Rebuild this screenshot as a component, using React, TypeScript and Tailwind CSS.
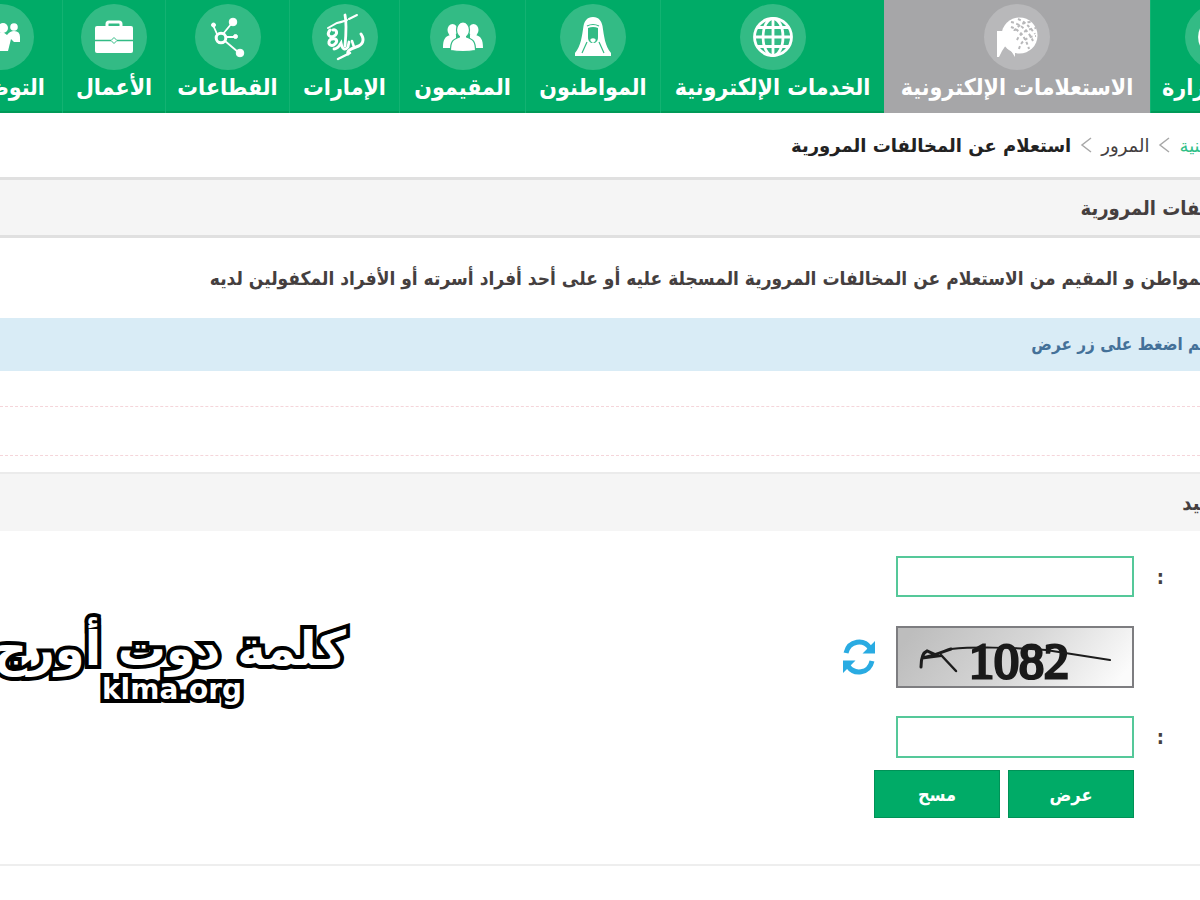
import { useState } from "react";
import type { ReactNode } from "react";

type NavItem = {
  title: string;
  width: string;
  icon: ReactNode;
  active?: boolean;
};

const GlobeIcon = () => (
  <svg viewBox="0 0 40 40" className="size-10" fill="none" stroke="white" strokeWidth="2.800">
    <circle cx="20" cy="20" r="18.5" />
    <ellipse cx="20" cy="20" rx="10" ry="18.5" />
    <path d="M20 1v38M1 20h38M4 10.500h32M4 29.500h32" />
  </svg>
);

const InquiryIcon = () => (
  <svg viewBox="0 0 42 42" className="size-[42px]" fill="none">
    <circle cx="23.500" cy="19.500" r="18" fill="white" />
    <g stroke="#b8b8ba" strokeWidth="2" strokeDasharray="3 2.500">
      <path d="M15 6c9 2 17 8 22 19M22 3c7 3 12 8 17 15M15 11c8 3 14 9 18 22" />
      <path d="M18 15c4-5 9-9 17-9M21 24c3-7 10-11 19-12M23 33c2-8 8-12 17-13" />
    </g>
    <path d="M1 15h18v26l-4.500-7-4.500-5-4 6-3 6H1z" fill="white" />
  </svg>
);

const CitizenIcon = () => (
  <svg viewBox="0 0 38 40" className="h-10 w-[38px]">
    <path
      d="M19 0c-6 0-8.500 4-9.500 9C8 19 7 29 1 36v3h36v-3c-6-7-7-17-8.500-27C27.500 4 25 0 19 0z"
      fill="white"
    />
    <path d="M14 11c3-1.500 7-1.500 10 0v9c0 4-2 6-5 6s-5-2-5-6z" fill="#33bb85" />
    <path d="M13 9c4-2 8-2 12 0M13 25l-5 11M25 25l5 11" stroke="#33bb85" strokeWidth="1.200" fill="none" />
    <path d="M16.500 22c2-1 3-1 5 0v2l-2.500 2-2.500-2z" fill="white" />
  </svg>
);

const ResidentsIcon = () => (
  <svg viewBox="0 0 40 30" className="h-[30px] w-10" fill="white">
    <ellipse cx="9.500" cy="8" rx="5" ry="6" />
    <ellipse cx="30.500" cy="8" rx="5" ry="6" />
    <path d="M0 26c0-9 2-11 7-13h6v13zM40 26c0-9-2-11-7-13h-6v13z" />
    <ellipse cx="20" cy="8" rx="6.500" ry="8" stroke="#33bb85" strokeWidth="1.200" />
    <path
      d="M7.500 28.500c0-9 2-11 9-13.500h7c7 2.500 9 4.500 9 13.500q-12.500 2-25 0z"
      stroke="#33bb85"
      strokeWidth="1.200"
    />
    <path d="M17 12h6v5h-6z" />
  </svg>
);

const CalligraphyIcon = () => (
  <svg viewBox="0 0 42 50" className="h-[50px] w-[42px]" fill="none" stroke="white" strokeLinecap="round">
    <path d="M21 3c2 9 1 20 0 31" strokeWidth="2.800" />
    <path d="M4 16l9-5c4-1 8-2 10-3M25 7l8-4" strokeWidth="2" />
    <path d="M6 18c-4 5 0 8 4 6s3-7-1-6M7 27c-5 4 0 9 4 5s0-6-3-5" strokeWidth="3" />
    <path d="M10 37c4 0 5-3 7-6 1 6 4 8 7 4l1-5" strokeWidth="2.800" />
    <path d="M37 22c4 6 2 11-5 13-6 2-9 4-8 7" strokeWidth="3" />
    <path d="M28 29l2 6M14 47l12-6" strokeWidth="2.500" />
  </svg>
);

const SectorsIcon = () => (
  <svg viewBox="0 0 36 42" className="h-[42px] w-9" fill="white" stroke="white">
    <circle cx="11" cy="22" r="4.800" fill="none" strokeWidth="3" />
    <path d="M13 18l9-11M7 18L3 9M16 21h9M15 25l13 11" strokeWidth="1.800" />
    <circle cx="3.500" cy="9" r="2" />
    <circle cx="23" cy="6" r="3.800" />
    <circle cx="25.500" cy="20.500" r="2" />
    <circle cx="30" cy="37" r="3.800" />
  </svg>
);

const BriefcaseIcon = () => (
  <svg viewBox="0 0 38 34" className="h-[34px] w-[38px]">
    <path d="M12 7V4q0-2 2-2h10q2 0 2 2v3" fill="none" stroke="white" strokeWidth="3" />
    <rect y="6" width="38" height="27" rx="2" fill="white" />
    <path d="M0 20.500h16M22 20.500h16" stroke="#33bb85" strokeWidth="1.500" />
    <path d="M19 17.500l3 3-3 3-3-3z" stroke="#33bb85" fill="white" />
  </svg>
);

const JobsIcon = () => (
  <svg viewBox="0 0 42 30" className="h-[30px] w-[42px]" fill="white">
    <circle cx="34" cy="5" r="3.800" />
    <circle cx="23" cy="6" r="5" />
    <circle cx="8" cy="5" r="4" />
    <path d="M27 13q3-4 7-4 6 0 6 6v5h-6l-3-3-3 12H14V11l9-1z" />
    <path d="M0 12q4-4 16-1v18H4z" />
  </svg>
);

const RefreshIcon = () => (
  <svg viewBox="0 0 34 36" className="h-9 w-[34px]">
    <g fill="none" stroke="#29abe2" strokeWidth="5">
      <path d="M4 14C7 1 22 0 28 9" />
      <path d="M30 22C27 35 12 36 6 27" />
    </g>
    <path d="M33 2v12.500H20.500zM1 34V21.500h12.500z" fill="#29abe2" />
  </svg>
);

const navItems: NavItem[] = [
  { title: "عن الوزارة", width: "w-[134px]", icon: <GlobeIcon /> },
  { title: "الاستعلامات الإلكترونية", width: "w-[266px]", icon: <InquiryIcon />, active: true },
  { title: "الخدمات الإلكترونية", width: "w-[224px]", icon: <GlobeIcon /> },
  { title: "المواطنون", width: "w-[135px]", icon: <CitizenIcon /> },
  { title: "المقيمون", width: "w-[126px]", icon: <ResidentsIcon /> },
  { title: "الإمارات", width: "w-[110px]", icon: <CalligraphyIcon /> },
  { title: "القطاعات", width: "w-[124px]", icon: <SectorsIcon /> },
  { title: "الأعمال", width: "w-[103px]", icon: <BriefcaseIcon /> },
  { title: "التوظيف", width: "w-[124px]", icon: <JobsIcon /> },
];

const Chevron = () => (
  <svg viewBox="0 0 12 16" className="h-4 w-3 shrink-0" fill="none" stroke="#a8a8a8" strokeWidth="1.500">
    <path d="M11 1L2 8l9 7" />
  </svg>
);

const Captcha = () => (
  <svg viewBox="0 0 238 62" className="h-[62px] w-[238px]" role="img" aria-label="1082">
    <defs>
      <linearGradient id="captcha-bg" x1="0" y1="0.400" x2="1" y2="0.600">
        <stop offset="0" stopColor="#bdbdbd" />
        <stop offset="0.500" stopColor="#d6d6d6" />
        <stop offset="1" stopColor="#fbfbfb" />
      </linearGradient>
    </defs>
    <rect x="1" y="1" width="236" height="60" fill="url(#captcha-bg)" stroke="#7d7d80" strokeWidth="2" />
    <text
      x="123"
      y="52"
      textAnchor="middle"
      direction="ltr"
      fontSize="50"
      stroke="#1a1a1a"
      strokeWidth="3"
      fill="#1a1a1a"
      className="font-['Liberation_Serif',serif]"
    >
      1082
    </text>
    <g fill="none" stroke="#1c1c1c" strokeLinecap="round">
      <path d="M25 41c0-8 1-14 6-16l11 5-16 2C38 30 46 26 55 23" strokeWidth="3" />
      <path d="M45 29l15 16" strokeWidth="2.500" />
      <path d="M55 23c20-2 60-2 95 1l64 10" strokeWidth="2" />
    </g>
  </svg>
);

function Navbar() {
  return (
    <nav className="-mr-[84px] flex h-[113px] border-b-2 border-[#009b58] bg-[#00ab67]">
      {navItems.map((item) => (
        <a
          key={item.title}
          href="#"
          className={`${item.width} ${
            item.active ? "bg-[#a6a6a8]" : "border-l border-[#13b272]"
          } flex h-[113px] shrink-0 flex-col items-center pt-1 text-white`}
        >
          <span
            className={`${
              item.active ? "bg-[#b8b8ba]" : "bg-[#33bb85]"
            } flex size-[66px] shrink-0 items-center justify-center rounded-full`}
          >
            {item.icon}
          </span>
          <span className="text-[23px] leading-[34px] font-bold whitespace-nowrap">{item.title}</span>
        </a>
      ))}
    </nav>
  );
}

export default function App() {
  const [idNumber, setIdNumber] = useState("");
  const [code, setCode] = useState("");

  return (
    <div
      dir="rtl"
      className="relative min-h-screen overflow-hidden bg-white font-['DejaVu_Sans_Condensed','DejaVu_Sans',sans-serif] text-[#453f3f]"
    >
      <Navbar />
      <div className="flex h-16 items-center gap-[9px] font-['DejaVu_Sans',sans-serif] text-[18px] whitespace-nowrap">
        <a href="#" className="text-[#2fc088]">
          {"\u200dنية"}
        </a>
        <Chevron />
        <a href="#">المرور</a>
        <Chevron />
        <span className="font-bold text-[#222]">استعلام عن المخالفات المرورية</span>
      </div>
      <h1 className="flex h-[61px] items-center border-y-3 border-[#e0e0e0] bg-[#f5f5f5] text-[20px] font-bold whitespace-nowrap">
        {"\u200dفات المرورية"}
      </h1>
      <p className="flex h-20 items-center text-[19px] font-bold whitespace-nowrap">
        {"\u200dمواطن و المقيم من الاستعلام عن المخالفات المرورية المسجلة عليه أو على أحد أفراد أسرته أو الأفراد المكفولين لديه"}
      </p>
      <div className="flex h-[53px] items-center bg-[#d9ecf6] text-[17px] font-bold text-[#447199]">
        {"\u200dم اضغط على زر عرض"}
      </div>
      <div className="mt-[35px] h-[50px] border-y border-dashed border-[#f5d5da]" />
      <section className="mt-4 border-b-2 border-[#eeeeee] pb-[46px]">
        <h2 className="flex h-[59px] items-center border-t-2 border-[#ebebeb] bg-[#f5f5f5] text-[20px] font-bold">
          {"\u200dيد"}
        </h2>
        <form className="flex flex-col items-start pt-[25px] pr-9" onSubmit={(e) => e.preventDefault()}>
          <div className="flex items-center gap-5">
            <label htmlFor="id-number" className="w-2.5 text-[20px] font-bold">
              :
            </label>
            <input
              id="id-number"
              value={idNumber}
              onChange={(e) => setIdNumber(e.target.value)}
              className="h-[41px] w-[238px] border-2 border-[#55c899] bg-white px-2"
            />
          </div>
          <div className="flex items-center gap-5 pt-[29px] pr-[30px] pb-7">
            <Captcha />
            <button type="button" aria-label="تحديث">
              <RefreshIcon />
            </button>
          </div>
          <div className="flex items-center gap-5">
            <label htmlFor="code" className="w-2.5 text-[20px] font-bold">
              :
            </label>
            <input
              id="code"
              value={code}
              onChange={(e) => setCode(e.target.value)}
              className="h-[42px] w-[238px] border-2 border-[#55c899] bg-white px-2"
            />
          </div>
          <div className="flex gap-2 pt-3 pr-[30px]">
            <button
              type="submit"
              className="h-12 w-[126px] border border-[#009257] bg-[#00ab67] text-[18px] font-bold text-white"
            >
              عرض
            </button>
            <button
              type="reset"
              className="h-12 w-[126px] border border-[#009257] bg-[#00ab67] text-[18px] font-bold text-white"
            >
              مسح
            </button>
          </div>
        </form>
      </section>
      {/* site watermark */}
      <div
        dir="ltr"
        className="absolute top-[616px] left-0 flex w-[346px] flex-col items-end font-['DejaVu_Sans',sans-serif] font-bold text-white [-webkit-text-stroke:8px_black] [paint-order:stroke_fill]"
      >
        <span dir="rtl" className="text-[48px] leading-[64px] whitespace-nowrap">
          كلمة دوت أورج
        </span>
        <span className="mr-[104px] -mt-1 text-[28px] leading-7">klma.org</span>
      </div>
    </div>
  );
}
